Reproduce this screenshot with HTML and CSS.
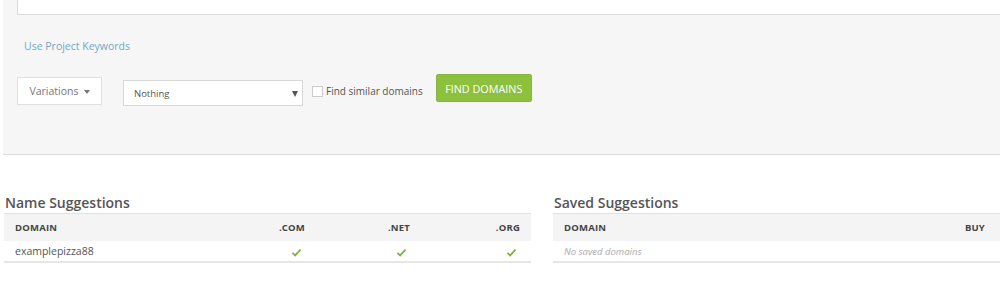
FILE: index.html
```html
<!DOCTYPE html>
<html>
<head>
<meta charset="utf-8">
<link rel="stylesheet" href="styles.css">
</head>
<body>
<div class="panel">
  <div class="textarea"></div>
  <a class="kw-link">Use Project Keywords</a>
  <div class="controls">
    <div class="btn-var">Variations <span class="caret"></span></div>
    <div class="select"><span>Nothing</span><span class="sel-arrow"></span></div>
    <label class="check"><span class="box"></span>Find similar domains</label>
    <div class="btn-find">FIND DOMAINS</div>
  </div>
</div>
<div class="results">
  <div class="block name-block">
    <h2>Name Suggestions</h2>
    <div class="table">
      <div class="row head cols4">
        <span>DOMAIN</span><span class="c">.COM</span><span class="c">.NET</span><span class="c">.ORG</span>
      </div>
      <div class="row data cols4">
        <span>examplepizza88</span>
        <span class="c"><svg class="tick" viewBox="0 0 12 10"><path d="M1.5 5.5 L4.5 8.2 L10.5 1.8" fill="none" stroke="#7cb342" stroke-width="2"/></svg></span>
        <span class="c"><svg class="tick" viewBox="0 0 12 10"><path d="M1.5 5.5 L4.5 8.2 L10.5 1.8" fill="none" stroke="#7cb342" stroke-width="2"/></svg></span>
        <span class="c"><svg class="tick" viewBox="0 0 12 10"><path d="M1.5 5.5 L4.5 8.2 L10.5 1.8" fill="none" stroke="#7cb342" stroke-width="2"/></svg></span>
      </div>
    </div>
  </div>
  <div class="block saved-block">
    <h2>Saved Suggestions</h2>
    <div class="table">
      <div class="row head cols2"><span>DOMAIN</span><span>BUY</span></div>
      <div class="row data"><span class="empty">No saved domains</span></div>
    </div>
  </div>
</div>
</body>
</html>
```
FILE: styles.css
```css
html, body {
  margin: 0;
  padding: 0;
  background: #fff;
  font-family: "Open Sans", "Liberation Sans", sans-serif;
  overflow: hidden;
}
.panel {
  margin-left: 3px;
  height: 155px;
  background: #f6f6f6;
  border-bottom: 1px solid #dcdcdc;
  padding-left: 14px;
  box-sizing: border-box;
  display: flex;
  flex-direction: column;
}
.textarea {
  height: 14px;
  background: #fff;
  border: 1px solid #dcdcdc;
  border-top: none;
  margin-right: -30px;
}
.kw-link {
  margin-top: 24px;
  margin-left: 7px;
  font-size: 10.5px;
  color: #72a8c8;
  line-height: 15px;
}
.controls {
  margin-top: 20px;
  display: flex;
  align-items: flex-start;
}
.btn-var {
  width: 85px;
  height: 28px;
  box-sizing: border-box;
  background: #fff;
  border: 1px solid #e0e0e0;
  margin-top: 3px;
  display: flex;
  align-items: center;
  justify-content: center;
  gap: 5px;
  font-size: 10.5px;
  color: #777;
}
.caret {
  width: 0;
  height: 0;
  border-left: 3.5px solid transparent;
  border-right: 3.5px solid transparent;
  border-top: 4px solid #777;
  margin-top: 1px;
}
.select {
  margin-left: 21px;
  margin-top: 6px;
  width: 180px;
  height: 26px;
  box-sizing: border-box;
  background: #fff;
  border: 1px solid #d8d8d8;
  display: flex;
  align-items: center;
  justify-content: space-between;
  padding: 1px 4px 0 10px;
  font-size: 9.5px;
  color: #555;
}
.sel-arrow {
  width: 0;
  height: 0;
  border-left: 3.5px solid transparent;
  border-right: 3.5px solid transparent;
  border-top: 6px solid #555;
}
.check {
  margin-left: 9px;
  margin-top: 11px;
  display: flex;
  align-items: center;
  font-size: 10px;
  color: #555;
  line-height: 12px;
}
.box {
  width: 11px;
  height: 11px;
  box-sizing: border-box;
  background: #fff;
  border: 1px solid #ccc;
  margin-right: 3px;
}
.btn-find {
  margin-left: 13px;
  width: 96px;
  height: 28px;
  box-sizing: border-box;
  background: #8cc03d;
  border: 1px solid #86b83a;
  border-radius: 2px;
  color: #fff;
  font-size: 10.8px;
  display: flex;
  align-items: center;
  justify-content: center;
}
.results {
  display: flex;
  gap: 22px;
  padding-left: 4px;
  margin-top: 38px;
}
.block h2 {
  margin: 0 0 0 1px;
  font-size: 14px;
  font-weight: 600;
  color: #555;
  line-height: 20px;
}
.name-block {
  width: 527px;
}
.saved-block {
  flex: 1;
}
.table {
  border-top: 1px solid #e2e2e2;
  border-bottom: 2px solid #e6e6e6;
}
.row {
  display: grid;
  align-items: center;
  padding: 0 11px;
}
.row.head {
  height: 27px;
  background: #f4f4f4;
  font-size: 9.5px;
  font-weight: 700;
  color: #444;
  letter-spacing: 0.2px;
}
.row.data {
  height: 20px;
  background: #fff;
  font-size: 10.5px;
  color: #555;
}
.cols4 {
  grid-template-columns: 1fr 48px 105px 110px;
}
.cols4 .c {
  text-align: right;
}
.row.data.cols4 .c {
  padding-right: 3px;
}
.cols2 {
  grid-template-columns: 1fr auto;
  padding-right: 15px;
}
.tick {
  width: 11px;
  height: 9px;
  display: inline-block;
  vertical-align: middle;
}
.empty {
  font-style: italic;
  color: #aaa;
  font-size: 9.5px;
}
```
